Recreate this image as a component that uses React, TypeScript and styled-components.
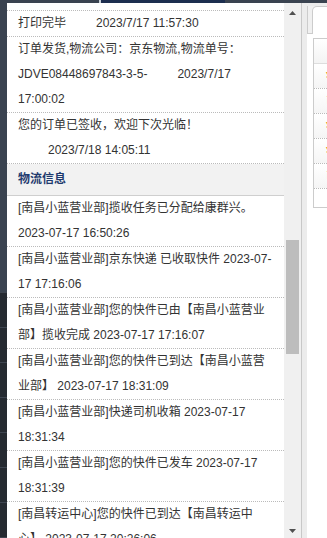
import styled, { createGlobalStyle } from "styled-components";

const GlobalStyle = createGlobalStyle`
  html, body {
    margin: 0;
    padding: 0;
    height: 100%;
    overflow: hidden;
  }
  body {
    font-family: "Liberation Sans", "Noto Sans CJK SC", sans-serif;
    font-size: 12px;
    color: #333;
    background: #fff;
  }
  #root {
    height: 100%;
  }
  * {
    box-sizing: border-box;
  }
`;

const Page = styled.div`
  display: flex;
  flex-direction: column;
  width: 327px;
  height: 538px;
  overflow: hidden;
`;

const TopBar = styled.div`
  flex: none;
  height: 3px;
  background: linear-gradient(
    to right,
    #3a4350 0 99px,
    #c9d0d8 99px 101px,
    #1d2e4f 101px 225px,
    #3a4350 225px
  );
`;

const Body = styled.div`
  display: flex;
  flex: 1;
  min-height: 0;
`;

const SideStrip = styled.div`
  flex: none;
  width: 7px;
  background:
    repeating-linear-gradient(to bottom, #3e4550 0 1px, transparent 1px 35px) 0 289px / 100% 260px no-repeat,
    linear-gradient(to bottom, #3a4350 0 289px, #252a31 289px);
`;

const Main = styled.div`
  flex: none;
  width: 277px;
  overflow: hidden;
  background: #fff;
  text-spacing-trim: space-all;
`;

const ScrolledTail = styled.div`
  height: 8px;
  border-bottom: 1px dotted #bbb;
`;

const Row = styled.div`
  padding: 0 11px;
  line-height: 25px;
  border-bottom: 1px dotted #bbb;
`;

const Time = styled.span`
  margin-left: 30px;
`;

const SectionTitle = styled.div`
  height: 32px;
  padding: 0 11px;
  line-height: 31px;
  background: #f2f2f2;
  border-bottom: 1px solid #cfcfcf;
  color: #1f3a6e;
  font-weight: bold;
`;

const ScrollBar = styled.div`
  flex: none;
  display: flex;
  flex-direction: column;
  width: 17px;
  background: #f0f0f0;
`;

const ScrollButton = styled.div<{ $shift: number }>`
  flex: none;
  display: flex;
  align-items: center;
  justify-content: center;
  height: 17px;
  padding-top: ${(p) => p.$shift}px;
`;

const Thumb = styled.div<{ $top: number }>`
  flex: none;
  width: 13px;
  height: 114px;
  margin: ${(p) => p.$top}px auto 0;
  background: #bdbdbd;
`;

const Fill = styled.div`
  flex: 1;
`;

const Divider = styled.div`
  flex: none;
  width: 1px;
  background: #c8c8c8;
`;

const Gutter = styled.div`
  flex: none;
  width: 5px;
  background: #ececec;
`;

const RightPane = styled.div`
  flex: 1;
  min-width: 0;
  overflow: hidden;
  background: #fff;
`;

const TabStrip = styled.div`
  padding-top: 3px;
  background: #ececec;
`;

const TabHeader = styled.div`
  display: flex;
  height: 28px;
  padding: 0 0 0 4px;
  border-left: 1px solid #ccc;
  border-bottom: 1px solid #ccc;
  background: #f0f0f0;
`;

const Tab = styled.div`
  flex: none;
  width: 120px;
  margin-bottom: -1px;
  border: 1px solid #ccc;
  border-bottom: none;
  border-radius: 5px 0 0 0;
  background: #fff;
`;

const TabBody = styled.div`
  padding: 4px 0 0 6px;
`;

const Table = styled.div`
  width: 240px;
  border: 1px solid #ccc;
  border-right: none;
`;

const TableHead = styled.div`
  height: 25px;
  border-bottom: 1px solid #ddd;
  background: linear-gradient(#fff, #f3f3f3);
`;

const TableRow = styled.div<{ $color: string }>`
  height: 25px;
  padding-left: 12px;
  line-height: 24px;
  font-size: 11px;
  white-space: nowrap;
  border-bottom: 1px dotted #bbb;
  background: linear-gradient(#fff, #f5f5f5);
  color: ${(p) => p.$color};
`;

const TableFoot = styled.div`
  height: 18px;
`;

const Arrow = ({ down }: { down?: boolean }) => (
  <svg width="7" height="4" viewBox="0 0 7 4">
    <polygon points={down ? "0,0 7,0 3.5,4" : "3.5,0 7,4 0,4"} fill="#505050" />
  </svg>
);

const orders = [
  { text: "打印完毕", time: "2023/7/17 11:57:30" },
  { text: "订单发货,物流公司：京东物流,物流单号：JDVE08448697843-3-5-", time: "2023/7/17 17:00:02" },
  { text: "您的订单已签收，欢迎下次光临！", time: "2023/7/18 14:05:11" },
];

const tracks = [
  "[南昌小蓝营业部]揽收任务已分配给康群兴。 2023-07-17 16:50:26",
  "[南昌小蓝营业部]京东快递 已收取快件 2023-07-17 17:16:06",
  "[南昌小蓝营业部]您的快件已由【南昌小蓝营业部】揽收完成 2023-07-17 17:16:07",
  "[南昌小蓝营业部]您的快件已到达【南昌小蓝营业部】 2023-07-17 18:31:09",
  "[南昌小蓝营业部]快递司机收箱 2023-07-17 18:31:34",
  "[南昌小蓝营业部]您的快件已发车 2023-07-17 18:31:39",
  "[南昌转运中心]您的快件已到达【南昌转运中心】 2023-07-17 20:26:06",
];

const sideRows = [
  { text: "¥128.00", color: "#e8900c" },
  { text: "已发货", color: "#c0392b" },
  { text: "¥59.90", color: "#e8900c" },
  { text: "¥36.00", color: "#e8900c" },
  { text: "已签收", color: "#c0392b" },
];

const App = () => {
  return (
    <>
      <GlobalStyle />
      <Page>
        <TopBar />
        <Body>
          <SideStrip />
          <Main>
            <ScrolledTail />
            {orders.map((o) => (
              <Row key={o.time}>
                {o.text}
                <Time>{o.time}</Time>
              </Row>
            ))}
            <SectionTitle>物流信息</SectionTitle>
            {tracks.map((t) => (
              <Row key={t}>{t}</Row>
            ))}
          </Main>
          <ScrollBar>
            <ScrollButton $shift={2}>
              <Arrow />
            </ScrollButton>
            <Thumb $top={220} />
            <Fill />
            <ScrollButton $shift={3}>
              <Arrow down />
            </ScrollButton>
          </ScrollBar>
          <Divider />
          <Gutter />
          <RightPane>
            <TabStrip>
              <TabHeader>
                <Tab />
              </TabHeader>
            </TabStrip>
            <TabBody>
              <Table>
                <TableHead />
                {sideRows.map((r) => (
                  <TableRow key={r.text + r.color} $color={r.color}>
                    {r.text}
                  </TableRow>
                ))}
                <TableFoot />
              </Table>
            </TabBody>
          </RightPane>
        </Body>
      </Page>
    </>
  );
};

export default App;
